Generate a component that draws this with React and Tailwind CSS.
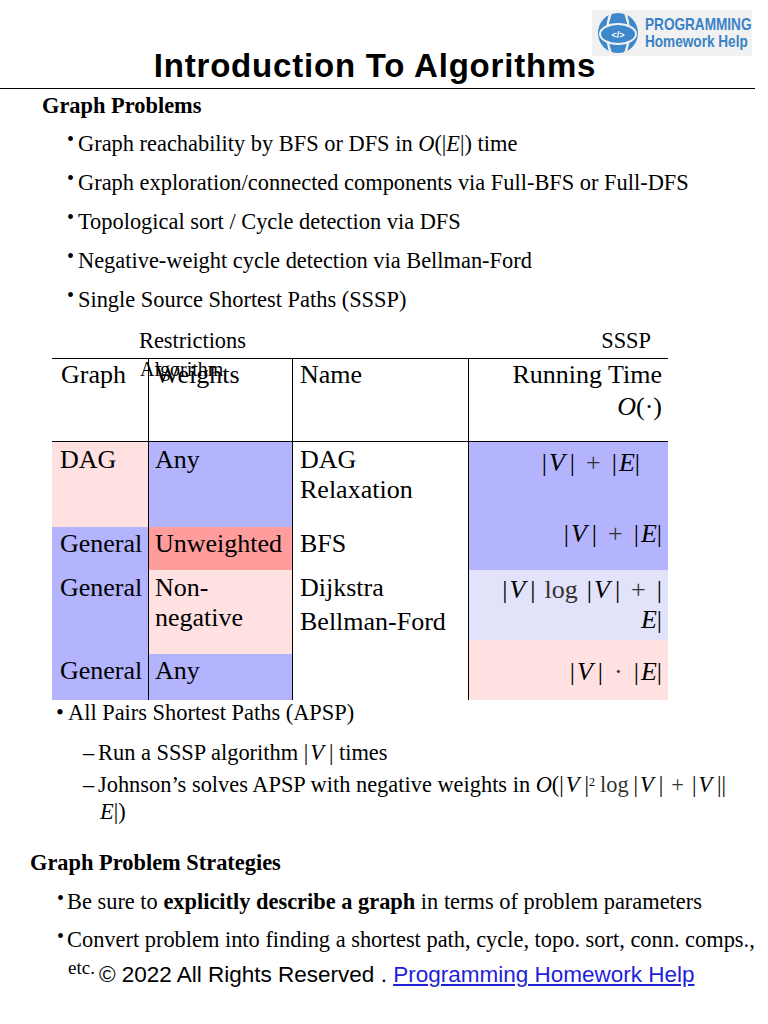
import React from "react";

const I = ({ children }) => <i className="italic">{children}</i>;
const AbsV = () => (
  <span>
    |<span className="ml-[2px]"><I>V</I></span>
    <span className="ml-[5px]">|</span>
  </span>
);
const AbsE = () => (
  <span>
    |<span className="ml-[2px]"><I>E</I></span>|
  </span>
);
const Op = ({ children }) => <span className="mx-[11px] text-[#333]">{children}</span>;

function Logo() {
  return (
    <div className="absolute left-[592px] top-[10px] w-[160px] h-[46px] bg-[#f1f1f1] flex items-center">
      <svg width="44" height="44" viewBox="0 0 44 44" className="ml-[4px] shrink-0">
        <circle cx="22" cy="22" r="20" fill="#3d87cb" />
        <path d="M15 1 Q7 22 15 43" stroke="#f1f1f1" strokeWidth="2.2" fill="none" />
        <path d="M29 1 Q37 22 29 43" stroke="#f1f1f1" strokeWidth="2.2" fill="none" />
        <ellipse cx="22" cy="23" rx="19" ry="11" fill="#f1f1f1" />
        <ellipse cx="22" cy="23" rx="17" ry="9" fill="#3d87cb" />
        <text x="22" y="26.5" textAnchor="middle" fill="#ffffff" fontSize="9" fontWeight="700" fontFamily="Liberation Sans, sans-serif">
          &lt;/&gt;
        </text>
      </svg>
      <div className="ml-[5px] flex flex-col font-['Liberation_Sans',sans-serif] font-bold text-[#3a82c6] text-[13.6px] leading-[17px]">
        <span className="inline-block scale-y-[1.25] origin-center">PROGRAMMING</span>
        <span className="inline-block scale-y-[1.25] origin-center">Homework Help</span>
      </div>
    </div>
  );
}

function Bullet({ children }) {
  return (
    <div className="flex h-[39px] leading-[39px] whitespace-nowrap">
      <span className="w-[11px] ml-[67px] text-[20px] leading-[31px]">•</span>
      <span>{children}</span>
    </div>
  );
}

function Table() {
  const pink = "bg-[#ffe1e1]";
  const blue = "bg-[#b3b3fe]";
  return (
    <div className="relative ml-[52px] mt-[3px] w-[616px] border-t border-black flex text-[26px] leading-[30px]">
      <span className="absolute left-[88px] top-0 text-[20px] leading-[20px] whitespace-nowrap">Algorithm</span>
      {/* Graph */}
      <div className="w-[96px] flex flex-col">
        <div className="h-[83px] border-b border-black pl-[9px] leading-[32px]">Graph</div>
        <div className={`h-[85px] ${pink} pl-[8px] pt-[3px]`}>DAG</div>
        <div className={`h-[43px] ${blue} pl-[8px] pt-[2px]`}>General</div>
        <div className={`h-[84px] ${blue} pl-[8px] pt-[3px]`}>General</div>
        <div className={`h-[46px] ${blue} pl-[8px] pt-[2px]`}>General</div>
      </div>
      {/* Weights */}
      <div className="w-[144px] border-l border-black flex flex-col">
        <div className="h-[83px] border-b border-black pl-[6px] leading-[32px]">Weights</div>
        <div className={`h-[85px] ${blue} pl-[6px] pt-[3px]`}>Any</div>
        <div className={`h-[43px] bg-[#ff9c9c] pl-[6px] pt-[2px]`}>Unweighted</div>
        <div className={`h-[84px] ${pink} pl-[6px] pt-[3px]`}>
          <div>Non-</div>
          <div>negative</div>
        </div>
        <div className={`h-[46px] ${blue} pl-[6px] pt-[2px]`}>Any</div>
      </div>
      {/* Name */}
      <div className="w-[176px] border-l border-black flex flex-col">
        <div className="h-[83px] border-b border-black pl-[7px] leading-[32px]">Name</div>
        <div className="h-[85px] pl-[7px] pt-[3px]">
          <div>DAG</div>
          <div>Relaxation</div>
        </div>
        <div className="h-[43px] pl-[7px] pt-[2px]">BFS</div>
        <div className="h-[130px] pl-[7px] pt-[1px] leading-[34px]">
          <div>Dijkstra</div>
          <div>Bellman-Ford</div>
        </div>
      </div>
      {/* Running time */}
      <div className="w-[200px] border-l border-black flex flex-col text-right whitespace-nowrap">
        <div className="h-[83px] border-b border-black pr-[6px] leading-[32px]">
          <div>Running Time</div>
          <div>
            <I>O</I>(·)
          </div>
        </div>
        <div className={`h-[128px] ${blue} pt-[6px]`}>
          <div className="pr-[28px]">
            <AbsV />
            <Op>+</Op>
            <AbsE />
          </div>
          <div className="pr-[6px] mt-[41px]">
            <AbsV />
            <Op>+</Op>
            <AbsE />
          </div>
        </div>
        <div className="h-[70px] bg-[#e2e2fa] pr-[6px] pt-[5px]">
          <div>
            <AbsV />
            <span className="mx-[9px] text-[#333]">log</span>
            <AbsV />
            <Op>+</Op>|
          </div>
          <div>
            <I>E</I>|
          </div>
        </div>
        <div className={`h-[60px] ${pink} pr-[6px] pt-[17px]`}>
          <AbsV />
          <Op>·</Op>
          <AbsE />
        </div>
      </div>
    </div>
  );
}

export default function App() {
  return (
    <div className="relative w-[768px] h-[1024px] overflow-hidden bg-white text-black font-['Liberation_Serif',serif] text-[22.4px]">
      <Logo />
      <div className="h-[88px] pt-[48px]">
        <div className="w-[750px] text-center font-['Liberation_Sans',sans-serif] font-bold text-[33px] tracking-[0.8px] leading-[36px]">
          Introduction To Algorithms
        </div>
      </div>
      <div className="w-[755px] h-[1px] bg-black" />
      <div className="mt-[3px] ml-[42px] font-bold leading-[28px]">Graph Problems</div>
      <div className="mt-[4px]">
        <Bullet>
          Graph reachability by BFS or DFS in <I>O</I>(|<I>E</I>|) time
        </Bullet>
        <Bullet>Graph exploration/connected components via Full-BFS or Full-DFS</Bullet>
        <Bullet>Topological sort / Cycle detection via DFS</Bullet>
        <Bullet>Negative-weight cycle detection via Bellman-Ford</Bullet>
        <Bullet>Single Source Shortest Paths (SSSP)</Bullet>
      </div>
      <div className="mt-[8px] ml-[139px] w-[512px] flex justify-between leading-[28px]">
        <span>Restrictions</span>
        <span>SSSP</span>
      </div>
      <Table />
      <div className="flex leading-[26px] whitespace-nowrap">
        <span className="ml-[56px] w-[12px]">•</span>
        <span>All Pairs Shortest Paths (APSP)</span>
      </div>
      <div className="mt-[12px] flex leading-[30px] whitespace-nowrap">
        <span className="ml-[83px] w-[15px]">–</span>
        <span>
          Run a SSSP algorithm <AbsV /> times
        </span>
      </div>
      <div className="mt-[3px] flex leading-[27px] whitespace-nowrap">
        <span className="ml-[83px] w-[15px]">–</span>
        <div>
          <div>
            Johnson’s solves APSP with negative weights in <I>O</I>(<AbsV />
            <sup className="text-[12px]">2</sup>
            <span className="mx-[5px] text-[#333]">log</span>
            <AbsV />
            <span className="mx-[8px] text-[#333]">+</span>
            <AbsV />|
          </div>
          <div className="ml-[2px]">
            <I>E</I>|)
          </div>
        </div>
      </div>
      <div className="mt-[24px] ml-[30px] font-bold leading-[28px]">Graph Problem Strategies</div>
      <div className="mt-[6px] flex leading-[38px] whitespace-nowrap">
        <span className="ml-[57px] w-[10px] text-[20px] leading-[31px]">•</span>
        <span>
          Be sure to <b className="font-bold">explicitly describe a graph</b> in terms of problem parameters
        </span>
      </div>
      <div className="flex leading-[38px] whitespace-nowrap">
        <span className="ml-[57px] w-[10px] text-[20px] leading-[31px]">•</span>
        <span>Convert problem into finding a shortest path, cycle, topo. sort, conn. comps.,</span>
      </div>
      <div className="mt-[1px] flex items-start whitespace-nowrap">
        <span className="ml-[68px] text-[19px] leading-[16px]">etc.</span>
        <span className="ml-[4px] font-['Liberation_Sans',sans-serif] text-[22.5px] leading-[30px]">
          © 2022 All Rights Reserved .{" "}
          <span className="text-[#1f1fd8] underline">Programming Homework Help</span>
        </span>
      </div>
    </div>
  );
}
